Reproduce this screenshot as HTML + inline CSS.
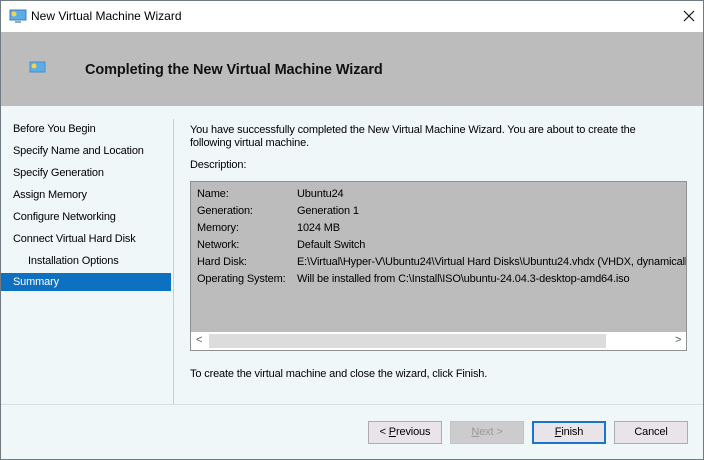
<!DOCTYPE html><html><head><style>
*{margin:0;padding:0;box-sizing:border-box}
body{width:704px;height:460px;position:relative;overflow:hidden;background:#f0f7f8;font-family:"Liberation Sans",sans-serif;font-size:11px;color:#000;border:1px solid #6f7b80;letter-spacing:-0.15px}
.a{position:absolute;white-space:nowrap}
.btn{position:absolute;top:420px;width:74px;height:23px;border:1px solid #adadad;background:#e9e4ea;text-align:center;line-height:21px;font-size:11px}
.li{position:absolute;left:12px;height:22px;line-height:22px}
</style></head><body>
<div class="a" style="left:0;top:0;width:702px;height:31px;background:#fff"></div>
<svg class="a" style="left:8px;top:8px" width="18" height="16"><rect x="1" y="1" width="16" height="10" fill="#5aaee8" stroke="#3d7fb8"/><circle cx="5" cy="5" r="2.5" fill="#f7d24a"/><rect x="6" y="12" width="6" height="2" fill="#9ab"/></svg>
<div class="a" style="left:30px;top:8px;font-size:12px;letter-spacing:0">New Virtual Machine Wizard</div>
<svg class="a" style="left:682px;top:9px" width="12" height="12"><path d="M1 1L11 11M11 1L1 11" stroke="#111" stroke-width="1.2"/></svg>
<div class="a" style="left:0;top:31px;width:702px;height:74px;background:#bcbcbc"></div>
<svg class="a" style="left:28px;top:60px" width="18" height="14"><rect x="1" y="1" width="15" height="10" fill="#5aaee8" stroke="#4a8ccc"/><circle cx="5" cy="5" r="2.5" fill="#f7d24a"/></svg>
<div class="a" style="left:84px;top:61px;font-size:14.5px;font-weight:bold;color:#111;letter-spacing:-0.1px">Completing the New Virtual Machine Wizard</div>
<div class="a" style="left:172px;top:118px;width:1px;height:285px;background:#c8d0d2"></div>
<div class="li" style="top:117px">Before You Begin</div>
<div class="li" style="top:139px">Specify Name and Location</div>
<div class="li" style="top:161px">Specify Generation</div>
<div class="li" style="top:183px">Assign Memory</div>
<div class="li" style="top:205px">Configure Networking</div>
<div class="li" style="top:227px">Connect Virtual Hard Disk</div>
<div class="li" style="top:249px;left:27px">Installation Options</div>
<div class="a" style="left:0;top:272px;width:170px;height:18px;background:#0e70c0;color:#fff;padding-left:12px;line-height:18px">Summary</div>
<div class="a" style="left:189px;top:123px;line-height:13px">You have successfully completed the New Virtual Machine Wizard. You are about to create the<br>following virtual machine.</div>
<div class="a" style="left:189px;top:158px">Description:</div>
<div class="a" style="left:189px;top:180px;width:497px;height:170px;background:#bcbcbc;border:1px solid #8c9090;overflow:hidden">
<div class="a" style="left:6px;top:4px;line-height:17px">Name:<br>Generation:<br>Memory:<br>Network:<br>Hard Disk:<br>Operating System:</div>
<div class="a" style="left:106px;top:4px;line-height:17px">Ubuntu24<br>Generation 1<br>1024 MB<br>Default Switch<br>E:\Virtual\Hyper-V\Ubuntu24\Virtual Hard Disks\Ubuntu24.vhdx (VHDX, dynamically expanding)<br>Will be installed from C:\Install\ISO\ubuntu-24.04.3-desktop-amd64.iso</div>
<div class="a" style="left:0;top:150px;width:495px;height:18px;background:#fff"></div>
<div class="a" style="left:18px;top:152px;width:397px;height:14px;background:#dcdcdc"></div>
<div class="a" style="left:5px;top:152px;color:#555">&lt;</div>
<div class="a" style="left:484px;top:152px;color:#555">&gt;</div>
</div>
<div class="a" style="left:189px;top:367px">To create the virtual machine and close the wizard, click Finish.</div>
<div class="a" style="left:0;top:403px;width:702px;height:1px;background:#d6dfe1"></div>
<div class="btn" style="left:367px">&lt; <u>P</u>revious</div>
<div class="btn" style="left:449px;background:#ccc;color:#999;border-color:#c4c4c4"><u>N</u>ext &gt;</div>
<div class="btn" style="left:531px;border:2px solid #1a74c8;line-height:19px"><u>F</u>inish</div>
<div class="btn" style="left:613px">Cancel</div>
</body></html>
